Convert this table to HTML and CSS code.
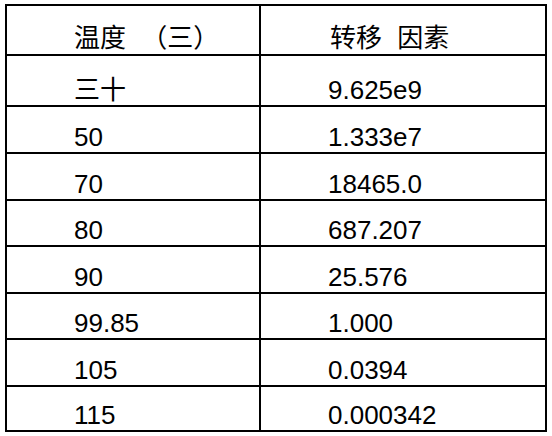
FILE: index.html
```html
<!DOCTYPE html>
<html lang="zh">
<head>
<meta charset="utf-8">
<title>转移因素</title>
<link rel="stylesheet" href="styles.css">
</head>
<body>
<div class="table">
  <div class="cell c1 head">温度 （三）</div><div class="cell c2 head head-2">转移 因素</div>
  <div class="cell c1">三十</div><div class="cell c2">9.625e9</div>
  <div class="cell c1">50</div><div class="cell c2">1.333e7</div>
  <div class="cell c1">70</div><div class="cell c2">18465.0</div>
  <div class="cell c1">80</div><div class="cell c2">687.207</div>
  <div class="cell c1">90</div><div class="cell c2">25.576</div>
  <div class="cell c1">99.85</div><div class="cell c2">1.000</div>
  <div class="cell c1">105</div><div class="cell c2">0.0394</div>
  <div class="cell c1">115</div><div class="cell c2">0.000342</div>
</div>
</body>
</html>
```

FILE: styles.css
```css
html, body {
  margin: 0;
  padding: 0;
  background: #ffffff;
}

body {
  padding: 4px 0 0 5px;
  font-family: "Liberation Sans", Arial, "Noto Sans CJK SC", sans-serif;
  color: #000000;
}

.table {
  display: grid;
  grid-template-columns: 252px 284px;
  grid-template-rows: 48px 49px 45px 45px 44px 45px 44px 45px 43px;
  gap: 2px;
  padding: 2px;
  width: max-content;
  background: #000000;
}

.cell {
  background: #ffffff;
  display: flex;
  align-items: flex-end;
  font-size: 26px;
  line-height: 30px;
  white-space: pre;
}

.c1 {
  padding-left: 67px;
}

.c2 {
  padding-left: 67px;
}

.head {
  padding-bottom: 1px;
  word-spacing: 8px;
}

.head-2 {
  padding-left: 69px;
}
```
